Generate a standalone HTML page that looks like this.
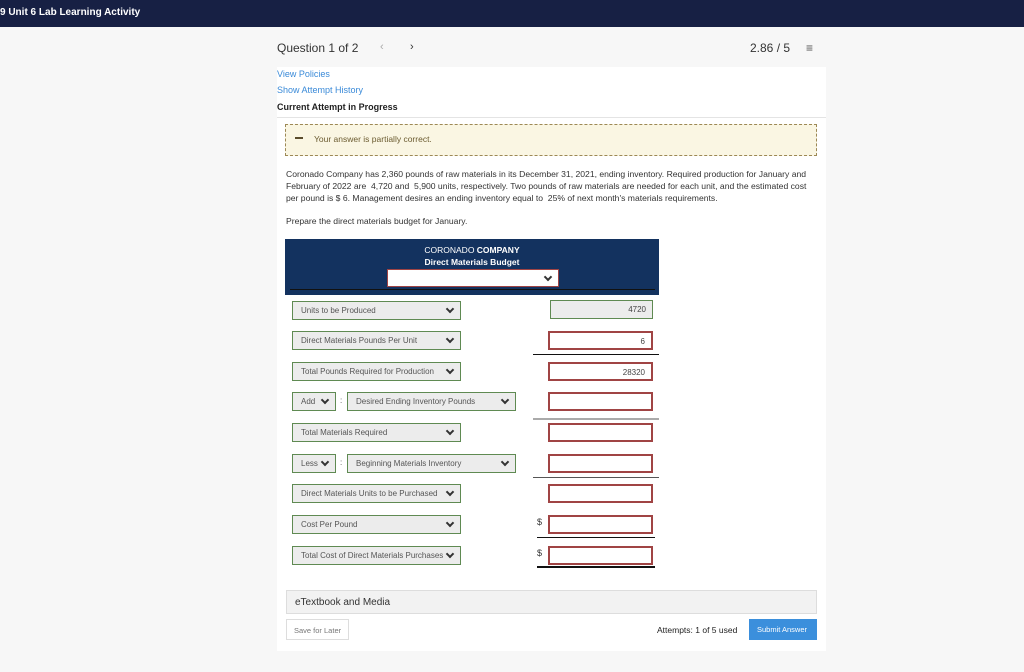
<!DOCTYPE html>
<html><head><meta charset="utf-8"><style>
*{box-sizing:border-box;margin:0;padding:0}
body{width:1024px;height:672px;background:#f7f7f7;font-family:"Liberation Sans",sans-serif;position:relative;overflow:hidden;color:#222}
.a{position:absolute}
.top{left:0;top:0;width:1024px;height:27px;background:#172044;color:#fff;font-size:10px;font-weight:bold;padding:7px 0 0 0}
.panel{left:277px;top:67px;width:549px;height:584px;background:#fff}
.sel{position:absolute;height:19px;background:#ececec;border:1px solid #5f8a52;font-size:8px;color:#555;padding:4px 0 0 8px}
.sel:after{content:"";position:absolute;right:7px;top:4px;width:4px;height:4px;border-right:2px solid #333;border-bottom:2px solid #333;transform:rotate(45deg)}
.in{position:absolute;left:548px;width:105px;height:19px;border:2px solid #a04444;background:#fff;font-size:8px;text-align:right;padding:4px 6px 0 0;color:#444}
.ln{position:absolute;height:1px;background:#111}
</style></head><body>
<div class="a top">9 Unit 6 Lab Learning Activity</div>
<div class="a" style="left:277px;top:41px;font-size:12px;color:#333">Question 1 of 2</div>
<div class="a" style="left:380px;top:41px;font-size:11px;color:#aaa">&lsaquo;</div>
<div class="a" style="left:410px;top:41px;font-size:11px;color:#333">&rsaquo;</div>
<div class="a" style="left:750px;top:41px;font-size:12px;color:#333">2.86 / 5</div>
<div class="a" style="left:806px;top:41px;font-size:12px;color:#555">&#8801;</div>
<div class="a panel"></div>
<div class="a" style="left:277px;top:69px;font-size:9px;color:#3a8ad8">View Policies</div>
<div class="a" style="left:277px;top:85px;font-size:9px;color:#3a8ad8">Show Attempt History</div>
<div class="a" style="left:277px;top:102px;font-size:9px;font-weight:bold;color:#222">Current Attempt in Progress</div>
<div class="a" style="left:277px;top:117px;width:549px;height:1px;background:#e4e4e4"></div>
<div class="a" style="left:285px;top:124px;width:532px;height:32px;background:#faf6e3;border:1px dashed #9c8855"></div>
<div class="a" style="left:295px;top:137px;width:8px;height:2px;background:#5a4c2c"></div>
<div class="a" style="left:314px;top:134px;font-size:8.5px;color:#6b5b30">Your answer is partially correct.</div>
<div class="a" style="left:286px;top:168px;width:530px;font-size:8.6px;line-height:12px;color:#333">Coronado Company has 2,360 pounds of raw materials in its December 31, 2021, ending inventory. Required production for January and February of 2022 are &nbsp;4,720 and &nbsp;5,900 units, respectively. Two pounds of raw materials are needed for each unit, and the estimated cost per pound is $ 6. Management desires an ending inventory equal to &nbsp;25% of next month's materials requirements.</div>
<div class="a" style="left:286px;top:216px;font-size:8.6px;color:#333">Prepare the direct materials budget for January.</div>
<div class="a" style="left:285px;top:239px;width:374px;height:56px;background:#13325f;color:#fff;text-align:center;font-size:8.5px;line-height:12px;padding-top:5px">CORONADO <b>COMPANY</b><br><b>Direct Materials Budget</b></div>
<div class="sel" style="left:387px;top:269px;width:172px;height:18px;background:#fff;border:1px solid #a04444"></div>
<div class="ln" style="left:290px;top:289px;width:365px"></div>
<div class="sel" style="left:292px;top:301px;width:169px">Units to be Produced</div>
<div class="in" style="left:550px;top:300px;width:103px;background:#ececec;border:1px solid #5f8a52">4720</div>
<div class="sel" style="left:292px;top:331px;width:169px">Direct Materials Pounds Per Unit</div>
<div class="in" style="top:331px">6</div>
<div class="ln" style="left:533px;top:354px;width:126px"></div>
<div class="sel" style="left:292px;top:362px;width:169px">Total Pounds Required for Production</div>
<div class="in" style="top:362px">28320</div>
<div class="sel" style="left:292px;top:392px;width:44px">Add</div>
<div class="a" style="left:340px;top:396px;font-size:8px;color:#555">:</div>
<div class="sel" style="left:347px;top:392px;width:169px">Desired Ending Inventory Pounds</div>
<div class="in" style="top:392px"></div>
<div class="ln" style="left:533px;top:418px;width:126px;background:#aaa;height:2px"></div>
<div class="sel" style="left:292px;top:423px;width:169px">Total Materials Required</div>
<div class="in" style="top:423px"></div>
<div class="sel" style="left:292px;top:454px;width:44px">Less</div>
<div class="a" style="left:340px;top:458px;font-size:8px;color:#555">:</div>
<div class="sel" style="left:347px;top:454px;width:169px">Beginning Materials Inventory</div>
<div class="in" style="top:454px"></div>
<div class="ln" style="left:533px;top:477px;width:126px;background:#555"></div>
<div class="sel" style="left:292px;top:484px;width:169px">Direct Materials Units to be Purchased</div>
<div class="in" style="top:484px"></div>
<div class="a" style="left:537px;top:517px;font-size:9px;color:#333">$</div>
<div class="sel" style="left:292px;top:515px;width:169px">Cost Per Pound</div>
<div class="in" style="top:515px"></div>
<div class="ln" style="left:537px;top:537px;width:118px"></div>
<div class="a" style="left:537px;top:548px;font-size:9px;color:#333">$</div>
<div class="sel" style="left:292px;top:546px;width:169px">Total Cost of Direct Materials Purchases</div>
<div class="in" style="top:546px"></div>
<div class="ln" style="left:537px;top:566px;width:118px;height:2px"></div>
<div class="a" style="left:286px;top:590px;width:531px;height:24px;background:#f2f2f2;border:1px solid #ddd;font-size:10px;color:#333;padding:6px 0 0 8px">eTextbook and Media</div>
<div class="a" style="left:286px;top:619px;width:63px;height:21px;border:1px solid #ddd;background:#fff;font-size:7.5px;color:#777;padding:6px 0 0 7px">Save for Later</div>
<div class="a" style="left:657px;top:625px;font-size:8.5px;color:#222">Attempts: 1 of 5 used</div>
<div class="a" style="left:749px;top:619px;width:68px;height:21px;background:#3b8fdc;color:#fff;font-size:7.5px;padding:6px 0 0 8px">Submit Answer</div>
</body></html>
